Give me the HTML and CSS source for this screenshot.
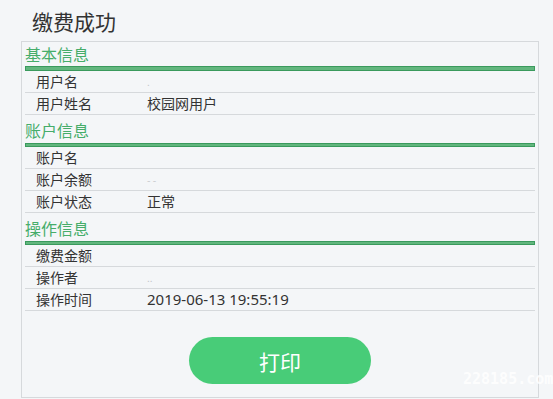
FILE: index.html
```html
<!DOCTYPE html>
<html lang="zh-CN">
<head>
    <meta charset="UTF-8">
    <title>缴费成功</title>
    <link rel="stylesheet" href="styles.css">
</head>
<body>

<h1 class="page-title">缴费成功</h1>

<div class="panel">
    <div class="section">
        <div class="sec-title">基本信息</div>
        <div class="sec-bar"></div>
        <div class="row"><span class="label">用户名</span><span class="value faint">.</span></div>
        <div class="row"><span class="label">用户姓名</span><span class="value">校园网用户</span></div>
    </div>

    <div class="section">
        <div class="sec-title">账户信息</div>
        <div class="sec-bar"></div>
        <div class="row"><span class="label">账户名</span><span class="value"></span></div>
        <div class="row"><span class="label">账户余额</span><span class="value faint">- -</span></div>
        <div class="row"><span class="label">账户状态</span><span class="value">正常</span></div>
    </div>

    <div class="section">
        <div class="sec-title">操作信息</div>
        <div class="sec-bar"></div>
        <div class="row"><span class="label">缴费金额</span><span class="value"></span></div>
        <div class="row"><span class="label">操作者</span><span class="value faint">..</span></div>
        <div class="row"><span class="label">操作时间</span><span class="value num">2019-06-13 19:55:19</span></div>
    </div>

    <div class="actions">
        <button class="print-btn">打印</button>
    </div>
</div>

<div class="watermark">228185.com</div>

</body>
</html>
```

FILE: styles.css
```css
body {
    margin: 0;
    background: #f4f6f8;
    font-family: "Noto Sans CJK SC", "Microsoft YaHei", sans-serif;
    color: #333;
    position: relative;
    width: 553px;
    height: 399px;
    overflow: hidden;
}
.page-title {
    margin: 0;
    padding: 7px 0 0 32px;
    height: 34px;
    font-size: 21px;
    font-weight: normal;
    line-height: 28px;
    color: #333;
}
.panel {
    margin-left: 21px;
    width: 510px;
    height: 355px;
    padding: 0 3px;
    border: 1px solid #d6d9dc;
    background: #f4f6f8;
}
.sec-title {
    height: 24px;
    line-height: 24px;
    font-size: 16px;
    color: #46ad6a;
}
.section + .section .sec-title {
    height: 28px;
    line-height: 30px;
}
.sec-bar {
    height: 3px;
    background: #62b67e;
    border: 1px solid #3a9a5d;
}
.section + .section .sec-bar {
    height: 2px;
}
.row {
    display: flex;
    height: 21px;
    line-height: 21px;
    border-bottom: 1px solid #d6d9dc;
    font-size: 14px;
}
.label {
    width: 111px;
    padding-left: 11px;
}
.value {
    color: #333;
}
.num {
    font-family: "Noto Sans", "Noto Sans CJK SC", sans-serif;
    font-size: 15px;
}
.faint {
    color: #c4c7ca;
    font-size: 10px;
}
.actions {
    display: flex;
    justify-content: center;
    padding-top: 26px;
}
.print-btn {
    width: 182px;
    height: 47px;
    border: none;
    border-radius: 24px;
    background: #48cc78;
    color: #fff;
    font-family: "Noto Sans CJK SC", sans-serif;
    font-size: 21px;
    cursor: pointer;
}
.watermark {
    position: absolute;
    left: 463px;
    top: 370px;
    font-family: "DejaVu Sans Mono", monospace;
    font-size: 15px;
    font-weight: bold;
    color: rgba(255, 255, 255, 0.85);
}
```
